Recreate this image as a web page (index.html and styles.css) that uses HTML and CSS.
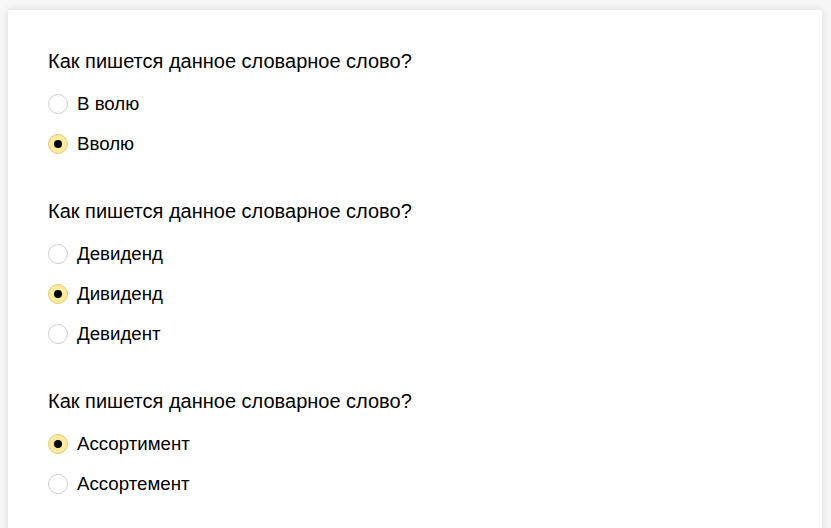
FILE: index.html
```html
<!DOCTYPE html>
<html lang="ru">
<head>
    <meta charset="UTF-8">
    <meta name="viewport" content="width=device-width, initial-scale=1.0">
    <title>Словарные слова</title>
    <link rel="stylesheet" href="styles.css">
</head>
<body>
    <div class="card">
        <div class="question">
            <div class="question-title">Как пишется данное словарное слово?</div>
            <label class="option"><input type="radio" name="q1"><span>В волю</span></label>
            <label class="option"><input type="radio" name="q1" checked><span>Вволю</span></label>
        </div>
        <div class="question">
            <div class="question-title">Как пишется данное словарное слово?</div>
            <label class="option"><input type="radio" name="q2"><span>Девиденд</span></label>
            <label class="option"><input type="radio" name="q2" checked><span>Дивиденд</span></label>
            <label class="option"><input type="radio" name="q2"><span>Девидент</span></label>
        </div>
        <div class="question">
            <div class="question-title">Как пишется данное словарное слово?</div>
            <label class="option"><input type="radio" name="q3" checked><span>Ассортимент</span></label>
            <label class="option"><input type="radio" name="q3"><span>Ассортемент</span></label>
        </div>
    </div>
</body>
</html>
```

FILE: styles.css
```css
body {
    margin: 0;
    padding: 10px 9px 0 8px;
    background-color: #f7f7f7;
    font-family: "Liberation Sans", Arial, sans-serif;
    color: #000;
    overflow: hidden;
}
.card {
    background-color: #fff;
    box-shadow: 0 0 10px rgba(0, 0, 0, 0.12);
    border-radius: 2px;
    padding: 40px 40px 40px 40px;
    min-height: 600px;
}
.question {
    margin-bottom: 36px;
}
.question-title {
    font-size: 20px;
    line-height: 22px;
    margin-bottom: 12px;
}
.option {
    display: flex;
    align-items: center;
    height: 40px;
    font-size: 18.7px;
    cursor: pointer;
}
.option input {
    appearance: none;
    -webkit-appearance: none;
    width: 20px;
    height: 20px;
    margin: 0 9px 0 0;
    border: 1px solid #d0d0d0;
    border-radius: 50%;
    background-color: #fff;
    box-sizing: border-box;
    display: flex;
    align-items: center;
    justify-content: center;
}
.option input:checked {
    background-color: #ffeba0;
    border-color: #e3c972;
}
.option input:checked::after {
    content: "";
    width: 8px;
    height: 8px;
    border-radius: 50%;
    background-color: #000;
}
```
